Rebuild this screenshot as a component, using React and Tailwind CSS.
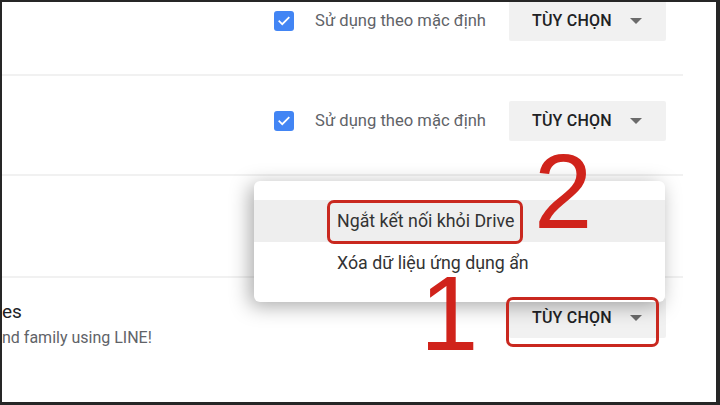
import React from 'react'

const font = { fontFamily: 'Roboto, "Noto Sans", Arial, sans-serif' }

function Checkbox() {
  return (
    <div className="w-[20px] h-[20px] rounded-[3px] bg-[#4285f4] flex items-center justify-center">
      <svg width="14" height="14" viewBox="0 0 24 24" fill="none">
        <path d="M4 12.5l5 5L20 6.5" stroke="white" strokeWidth="3" strokeLinecap="square" />
      </svg>
    </div>
  )
}

function OptionButton() {
  return (
    <div className="w-[157px] h-[40px] rounded-[2px] bg-[#f1f1f1] flex items-center pl-[23px] pr-[24px]">
      <span className="text-[16px] font-medium text-[#202124] tracking-[0.2px]">TÙY CHỌN</span>
      <svg className="ml-auto" width="12" height="6" viewBox="0 0 12 6">
        <path d="M0 0h12L6 6z" fill="#6b6b6b" />
      </svg>
    </div>
  )
}

function SettingRow({ top = 'pt-[25px]', height = 'h-[100px]' }) {
  return (
    <div className={`${height} ${top} border-b-2 border-[#f1f1f1] flex items-start justify-end pr-[17px]`}>
      <div className="flex items-center h-[40px]">
        <Checkbox />
        <span className="ml-[21px] text-[16.6px] text-[#5f6368]">Sử dụng theo mặc định</span>
        <div className="ml-[23px]">
          <OptionButton />
        </div>
      </div>
    </div>
  )
}

export default function App() {
  return (
    <div
      className="relative w-[720px] h-[405px] overflow-hidden bg-white border-t-2 border-l-2 border-b-[3px] border-r-[4px] border-[#262626]"
      style={font}
    >
      <div className="w-[681px] -mt-[26px]">
        <SettingRow />
        <SettingRow />
        <div className="h-[102px] border-b-2 border-[#f1f1f1]" />
        <div className="flex items-start pt-[20px] pr-[17px]">
          <div className="flex-1 pt-[3px]">
            <div className="text-[19px] leading-[22px] text-[#202124]">es</div>
            <div className="mt-[5px] text-[16px] leading-[20px] text-[#5f6368]">nd family using LINE!</div>
          </div>
          <OptionButton />
        </div>
      </div>

      {/* dropdown menu */}
      <div className="absolute left-[252px] top-[179px] w-[411px] h-[121px] rounded-[6px] bg-white shadow-[-4px_4px_20px_rgba(0,0,0,0.34)] pt-[19px]">
        <div className="h-[42px] bg-[#eeeeee] flex items-center pl-[83px] text-[17.8px] text-[#333]">
          Ngắt kết nối khỏi Drive
        </div>
        <div className="h-[42px] flex items-center pl-[83px] text-[17.8px] text-[#333]">
          Xóa dữ liệu ứng dụng ẩn
        </div>
      </div>

      {/* annotations */}
      <div className="absolute left-[325px] top-[198px] w-[196px] h-[44px] rounded-[7px] border-[3px] border-[#c9281f]" />
      <div className="absolute left-[504px] top-[295px] w-[153px] h-[50px] rounded-[7px] border-[3px] border-[#c9281f]" />
      <div
        className="absolute left-[532px] top-[137px] text-[105px] leading-none text-[#d0231b]"
        style={{ fontFamily: '"Liberation Sans", Arial, sans-serif' }}
      >
        2
      </div>
      <div
        className="absolute left-[418px] top-[259px] text-[105px] leading-none text-[#d0231b]"
        style={{ fontFamily: '"Liberation Sans", Arial, sans-serif' }}
      >
        1
      </div>
    </div>
  )
}
